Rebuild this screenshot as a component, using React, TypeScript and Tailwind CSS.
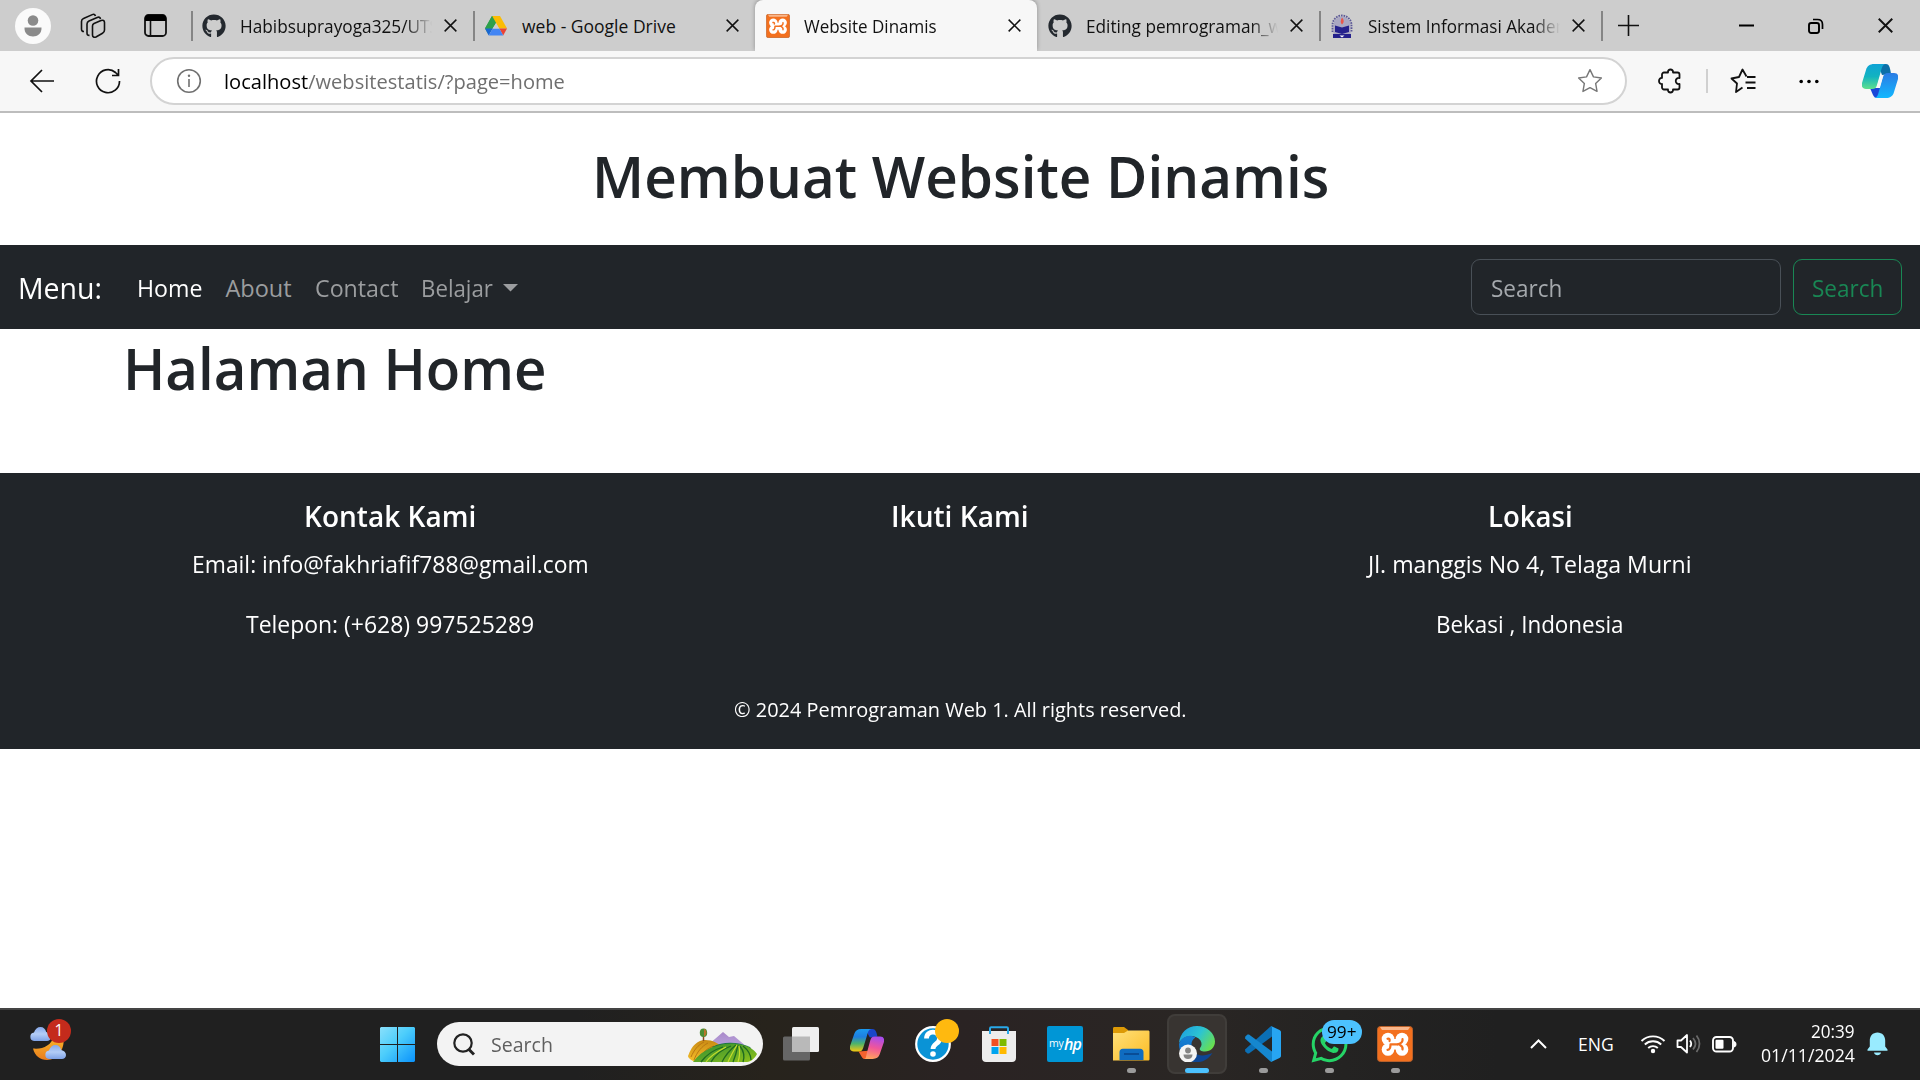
import { useLayoutEffect, useRef, useState, type ReactNode } from "react";
import { FaGithub, FaWhatsapp } from "react-icons/fa";

/** Single line of text that is condensed or widened to fill exactly `w` pixels. */
function Fit({ w, className = "", children }: { w: number; className?: string; children: ReactNode }) {
  const ref = useRef<HTMLSpanElement>(null);
  const [scale, setScale] = useState(1);
  useLayoutEffect(() => {
    if (ref.current && ref.current.offsetWidth) setScale(w / ref.current.offsetWidth);
  }, [w]);
  return (
    <span className={`block shrink-0 whitespace-nowrap ${className}`} style={{ width: w }}>
      <span ref={ref} className="inline-block origin-left" style={{ transform: `scaleX(${scale})` }}>
        {children}
      </span>
    </span>
  );
}

function Close({ s = 13, w = 1.6 }: { s?: number; w?: number }) {
  return (
    <svg width={s} height={s} viewBox="0 0 14 14" fill="none" stroke="#111" strokeWidth={w}>
      <path d="M.7.7 13.3 13.3M13.3.7.7 13.3" />
    </svg>
  );
}

function Drive() {
  return (
    <svg width="24" height="24" viewBox="0 0 24 24">
      <path d="M8 2h8L12 9z" fill="#188038" />
      <path d="M8 2 1 14.5 4.5 20.5 12 9z" fill="#34a853" />
      <path d="M8 2h8l7 12.500H15z" fill="#fbbc04" />
      <path d="M8 2 12 9 8.700 14.500H1z" fill="#2da04b" />
      <path d="M1 14.500H8.700L4.700 21.500z" fill="#1967d2" />
      <path d="M15.300 14.500H23L19.200 21.500z" fill="#ea4335" />
      <path d="M8.700 14.500H15.300L19.200 21.500H4.800z" fill="#4285f4" />
      <path d="M12 9 15.200 14.500H8.700z" fill="#cdcdcd" />
    </svg>
  );
}

function Xampp({ s }: { s: number }) {
  return (
    <svg width={s} height={s} viewBox="0 0 36 36">
      <rect x=".5" y=".5" width="35" height="35" rx="3" fill="#f3701e" stroke="#b9602a" />
      <path d="M3 1h30l-2 3H5z" fill="#f9b78c" />
      <g fill="#fff">
        <circle cx="11" cy="13" r="6.300" />
        <circle cx="25" cy="13" r="6.300" />
        <circle cx="11" cy="23.500" r="6.300" />
        <circle cx="25" cy="23.500" r="6.300" />
        <path d="M8 13h20l-1.500 5.200 1.500 5.300H8l1.500-5.300z" />
      </g>
      <g fill="none" stroke="#f3701e" strokeWidth="2.200" strokeLinecap="round" strokeLinejoin="round">
        <path d="M10.500 12.800c2-.6 2.500 1 2 2.200M10.500 23.800c2.500.3 3-3 3-5.500h7.500" />
        <path d="M21 18.300c3-.8 5-2.500 4.500-5.300M23 19c2 1 3 2.500 2.500 4.500" />
      </g>
    </svg>
  );
}

function Crest() {
  return (
    <svg width="24" height="26" viewBox="0 0 24 26">
      <path d="M3.500 23V12a8.500 8.500 0 0 1 17 0v11z" fill="#aaa8c2" />
      <path d="M2.500 19v-7a9.500 9.500 0 0 1 19 0v7" fill="none" stroke="#5a5796" strokeWidth="1.800" strokeDasharray="1.600 1" />
      <path d="M5 12.500l7 2 7-2v6.500l-7 2-7-2z" fill="#25218c" />
      <path d="M3 21h18v4H3z" fill="#25218c" />
      <path d="M12 4.500c2.500 3 2 5 0 7-2-2-1.500-4 0-7z" fill="#e8574b" />
      <path d="M9.500 22.500h5l-2.500 2z" fill="#fff" />
    </svg>
  );
}

function Tab({ icon, title, w, active, bar }: { icon: ReactNode; title: string; w: number; active?: boolean; bar?: boolean }) {
  return (
    <div
      className={`flex h-[51px] w-[282px] shrink-0 items-center ${
        active ? "rounded-t-lg bg-[#f7f7f7] shadow-[0_-1px_4px_rgba(0,0,0,0.3)]" : ""
      }`}
    >
      <span className={`h-[30px] w-[2px] ${bar ? "bg-[#858585]" : ""}`} />
      <span className="ml-[9px] flex w-6 justify-center">{icon}</span>
      <span
        className={`ml-[14px] w-[192px] overflow-hidden ${
          w > 190 ? "[mask-image:linear-gradient(to_right,#000_165px,transparent_192px)]" : ""
        }`}
      >
        <Fit w={w} className="text-[17.5px] leading-6">
          {title}
        </Fit>
      </span>
      <span className="ml-3">
        <Close />
      </span>
    </div>
  );
}

function TabStrip() {
  return (
    <div className="flex h-[51px] items-center bg-[#cdcdcd] text-[#111]">
      <div className="flex w-[191px] shrink-0 items-center">
        <span className="ml-[15px] flex h-9 w-9 items-center justify-center rounded-full bg-[#fafafa]">
          <svg width="18" height="22" viewBox="0 0 18 22" fill="#8a8a8a">
            <circle cx="9" cy="5.500" r="5.300" />
            <path d="M.5 12.500h17c.4 6-4 9-8.500 9s-8.900-3-8.500-9z" />
          </svg>
        </span>
        <svg className="ml-[29px]" width="26" height="26" viewBox="0 0 26 26" fill="none" stroke="#111" strokeWidth="1.600">
          <path d="M14 10.500 21 7.500c2-.8 3.500 0 3.500 2v7.500c0 1.500-.5 2.500-2 3.300L16 24c-2 .8-3.500 0-3.500-2v-9c0-1.200.4-2 1.500-2.500z" />
          <path d="M20.500 6c-.4-1.800-1.700-2.300-3.300-1.600L9 8c-1.400.6-2 1.500-2 3v9c0 1.600.7 2.500 2.500 2.400" />
          <path d="M15.500 3c-.5-1.700-1.700-2.100-3.200-1.400L3.500 5.500c-1.500.6-2 1.500-2 3V16c0 1.600.7 2.600 2.500 2.500" />
        </svg>
        <svg className="ml-[38px]" width="23" height="23" viewBox="0 0 23 23">
          <rect x="1" y="1" width="21" height="21" rx="3.500" fill="none" stroke="#111" strokeWidth="1.800" />
          <path d="M1 7V4a3 3 0 0 1 3-3h15a3 3 0 0 1 3 3v3z" fill="#000" />
          <path d="M6.500 7v15" stroke="#111" strokeWidth="1.600" />
        </svg>
      </div>
      <Tab bar icon={<FaGithub size={24} color="#24292f" />} title="Habibsuprayoga325/UTS" w={199} />
      <Tab bar icon={<Drive />} title="web - Google Drive" w={154} />
      <Tab active icon={<Xampp s={24} />} title="Website Dinamis" w={133} />
      <Tab icon={<FaGithub size={24} color="#24292f" />} title="Editing pemrograman_w" w={196} />
      <Tab bar icon={<Crest />} title="Sistem Informasi Akadem" w={203} />
      <span className="h-[30px] w-[2px] bg-[#858585]" />
      <svg className="ml-[15px]" width="21" height="21" viewBox="0 0 21 21" stroke="#111" strokeWidth="1.600">
        <path d="M10.500 0v21M0 10.500h21" />
      </svg>
      <div className="flex grow items-center justify-end gap-[54px] pr-[27px]">
        <svg width="15" height="3" viewBox="0 0 15 3">
          <rect width="15" height="2" y=".5" fill="#000" />
        </svg>
        <svg width="16" height="16" viewBox="0 0 16 16" fill="none" stroke="#000" strokeWidth="1.900">
          <rect x="1" y="5" width="10" height="10" rx="2.200" />
          <path d="M5 1.500h4.500c3 0 5 2 5 5V11" strokeWidth="1.700" />
        </svg>
        <Close s={15} w={1.8} />
      </div>
    </div>
  );
}

const STAR = "M12 1.500l3.200 6.700 7.300 1-5.300 5.100 1.300 7.300L12 18.100l-6.500 3.500 1.300-7.300L1.500 9.200l7.300-1z";

function Toolbar() {
  return (
    <div className="relative flex h-[62px] items-center border-b-2 border-[#bdbdbd] bg-[#f7f7f7]">
      <svg className="ml-[29px] shrink-0" width="26" height="24" viewBox="0 0 26 24" fill="none" stroke="#111" strokeWidth="1.700">
        <path d="M25 12H2M13 1 2 12l11 11" />
      </svg>
      <svg className="ml-[40px] shrink-0" width="26" height="26" viewBox="0 0 26 26" fill="none" stroke="#111" strokeWidth="1.700">
        <path d="M24.500 13A11.500 11.500 0 1 1 20.500 4.500L23 7M23.500 1v6.500H17" />
      </svg>
      <div className="ml-[29px] flex h-12 w-[1477px] shrink-0 items-center rounded-full border-2 border-[#d3d3d3] bg-white">
        <svg className="ml-[24px]" width="26" height="26" viewBox="0 0 26 26" fill="none" stroke="#707070" strokeWidth="1.600">
          <circle cx="13" cy="13" r="11.300" />
          <path d="M13 11v8" />
          <circle cx="13" cy="7.800" r="1.200" fill="#707070" stroke="none" />
        </svg>
        <Fit w={341} className="ml-[22px] text-[20.5px] leading-7 text-[#6f6f6f]">
          <span className="text-black">localhost</span>/websitestatis/?page=home
        </Fit>
        <svg className="mr-[22px] ml-auto" width="26" height="26" viewBox="0 0 24 24" fill="none" stroke="#777" strokeWidth="1.300" strokeLinejoin="round">
          <path d={STAR} />
        </svg>
      </div>
      <svg className="ml-[31px] shrink-0" width="24" height="26" viewBox="0 0 24 26" fill="none" stroke="#111" strokeWidth="1.800" strokeLinejoin="round">
        <path d="M6 4.500h4c-.6-4 5.600-4 5 0h4.500c1 0 2 1 2 2V10c-5-.6-5 6.600 0 6v3.500c0 1-1 2-2 2H15c.6 4-5.600 4-5 0H6c-1 0-2-1-2-2V16c-4 .5-4-6.500 0-6V6.500c0-1 1-2 2-2z" />
      </svg>
      <span className="ml-[24px] h-6 w-[2px] shrink-0 bg-[#d0d0d0]" />
      <svg className="ml-[22px] shrink-0" width="26" height="26" viewBox="0 0 26 26" fill="none" stroke="#111" strokeWidth="1.800" strokeLinejoin="round">
        <path d="M16.500 8.500 12.500 1.500 9 9 1.500 10.500 7 15.500 6 24l6.500-4.500M17 9h8.500M15.500 14.500h10M17 20h8.500" />
      </svg>
      <svg className="ml-[43px] shrink-0" width="20" height="5" viewBox="0 0 20 5">
        <circle cx="2.200" cy="2.500" r="1.800" />
        <circle cx="10" cy="2.500" r="1.800" />
        <circle cx="17.800" cy="2.500" r="1.800" />
      </svg>
      <svg className="ml-[43px] shrink-0" width="36" height="34" viewBox="0 0 36 34">
        <defs>
          <linearGradient id="tc1" x1="0" y1="0" x2="0" y2="1">
            <stop offset="0" stopColor="#0fa3d6" />
            <stop offset=".5" stopColor="#12b3c0" />
            <stop offset="1" stopColor="#5fe08c" />
          </linearGradient>
          <linearGradient id="tc2" x1="0" y1="0" x2="0" y2="1">
            <stop offset="0" stopColor="#2a7be4" />
            <stop offset="1" stopColor="#12b8ff" />
          </linearGradient>
        </defs>
        <path d="M16 0h8c3 0 4 3 5 10l-9 1z" fill="#0c6fa8" />
        <path d="M8 24l3 7c1 2 2 3 4 3h4l4-10z" fill="#1a47d8" />
        <path d="M12 0h12c-3 0-4 3-5 7l-4 14c-1 3-2 4-5 4H4c-3 0-5-2-4-6L4 6C5 2 8 0 12 0z" fill="url(#tc1)" />
        <path d="M24 34H12c3 0 4-3 5-7l4-14c1-3 2-4 5-4h6c3 0 5 2 4 6l-4 13c-1 4-4 6-8 6z" fill="url(#tc2)" />
        <path d="M18.500 11h2.800L17.500 24h-3z" fill="#f7f7f7" />
      </svg>
    </div>
  );
}

function NavBar() {
  return (
    <nav className="flex h-[84px] items-center bg-[#212529] px-[18px] pt-px">
      <Fit w={84} className="text-[29.5px] leading-10 text-white">Menu:</Fit>
      <Fit w={65} className="ml-[34.5px] text-[23.5px] leading-9 text-white">Home</Fit>
      <Fit w={66} className="ml-[24px] text-[23.5px] leading-9 text-[#9b9d9f]">About</Fit>
      <Fit w={83} className="ml-[23px] text-[23.5px] leading-9 text-[#9b9d9f]">Contact</Fit>
      <Fit w={72} className="ml-[23px] text-[23.5px] leading-9 text-[#9b9d9f]">Belajar</Fit>
      <svg className="ml-[10.5px]" width="15" height="8" viewBox="0 0 15 8">
        <path d="M0 0h15L7.500 7.500z" fill="#9b9d9f" />
      </svg>
      <div className="mb-px ml-auto flex h-14 w-[310px] items-center rounded-[9px] border border-[#495057] pt-px pl-[19px]">
        <Fit w={71} className="text-[23.5px] leading-9 text-[#a5a9ad]">Search</Fit>
      </div>
      <div className="mb-px ml-3 flex h-14 w-[109px] items-center justify-center rounded-[9px] border border-[#198754] pt-px">
        <Fit w={71} className="text-[23.5px] leading-9 text-[#198754]">Search</Fit>
      </div>
    </nav>
  );
}

function FooterColumn({ title, w, lines }: { title: string; w: number; lines: [string, number][] }) {
  return (
    <div className="flex w-[570px] flex-col items-center">
      <Fit w={w} className="mb-3 text-[29.5px] leading-9 font-semibold">{title}</Fit>
      {lines.map(([text, width]) => (
        <Fit key={text} w={width} className="mb-6 text-[23.5px] leading-9">{text}</Fit>
      ))}
    </div>
  );
}

function Page() {
  return (
    <div className="h-[895px] bg-white text-[#212529]">
      <header className="flex h-[132px] justify-center pt-[26px]">
        <Fit w={737} className="text-[58.5px] leading-[72px] font-semibold">Membuat Website Dinamis</Fit>
      </header>
      <NavBar />
      <main className="h-[144px] px-[123px] pt-[2px]">
        <Fit w={423} className="text-[58.5px] leading-[72px] font-semibold">Halaman Home</Fit>
      </main>
      <footer className="flex h-[276px] flex-col items-center bg-[#212529] pt-[25px] text-white">
        <div className="flex h-[195px]">
          <FooterColumn title="Kontak Kami" w={172} lines={[["Email: info@fakhriafif788@gmail.com", 397], ["Telepon: (+628) 997525289", 288]]} />
          <FooterColumn title="Ikuti Kami" w={138} lines={[]} />
          <FooterColumn title="Lokasi" w={85} lines={[["Jl. manggis No 4, Telaga Murni", 324], ["Bekasi , Indonesia", 188]]} />
        </div>
        <Fit w={453} className="ml-px text-[20.5px] leading-8">© 2024 Pemrograman Web 1. All rights reserved.</Fit>
      </footer>
    </div>
  );
}

function Cell({ children, mark }: { children: ReactNode; mark?: "idle" | "active" }) {
  return (
    <div className="relative flex h-[70px] w-[66px] shrink-0 items-center justify-center">
      {mark === "active" && <span className="absolute top-[4px] left-[3px] h-[60px] w-[60px] rounded-lg border-2 border-[#403d3a] bg-[#383431]" />}
      <span className="relative mb-[2px] flex">{children}</span>
      {mark === "idle" && <span className="absolute top-[58px] left-[28.5px] h-[5px] w-[9px] rounded-full bg-[#9b9b9b]" />}
      {mark === "active" && <span className="absolute top-[58px] left-[21px] h-[5px] w-6 rounded-full bg-[#4cc2ff]" />}
    </div>
  );
}

function Cloud({ x, y, s }: { x: number; y: number; s: number }) {
  return (
    <g transform={`translate(${x} ${y}) scale(${s})`}>
      <path d="M4 14a4.300 4.300 0 0 1 0-8.500C5 2 7.500 0 10.500 0s5 2 5.700 5C19 5.500 21 7.500 21 10s-2 4-4 4z" fill="url(#cl)" />
    </g>
  );
}

function Weather() {
  return (
    <div className="relative mb-[6px] ml-[28px] h-[46px] w-[46px] shrink-0">
      <svg width="46" height="46" viewBox="0 0 46 46">
        <defs>
          <linearGradient id="cl" x1="0" y1="0" x2="0" y2="1">
            <stop offset="0" stopColor="#86a8ea" />
            <stop offset=".5" stopColor="#b3cdf6" />
            <stop offset="1" stopColor="#7fa2e6" />
          </linearGradient>
          <linearGradient id="mn" x1="0" y1="0" x2="0" y2="1">
            <stop offset="0" stopColor="#fbb829" />
            <stop offset="1" stopColor="#e97c1c" />
          </linearGradient>
        </defs>
        <path d="M5 29.500c10 1 18-3 21-12h9c3 11-5 23.500-16 23.500C12 41 7 37 5 29.500z" fill="url(#mn)" />
        <Cloud x={2} y={8} s={1} />
        <Cloud x={17} y={26} s={1} />
      </svg>
      <span className="absolute top-0 left-[19px] flex h-6 w-6 items-center justify-center rounded-full bg-[#c42b1c] text-[15.5px] text-white">1</span>
    </div>
  );
}

function Landscape() {
  return (
    <svg width="70" height="36" viewBox="0 0 70 36">
      <defs>
        <linearGradient id="mt" x1="0" y1="0" x2="0" y2="1">
          <stop offset="0" stopColor="#a988c9" />
          <stop offset="1" stopColor="#c2b4e8" />
        </linearGradient>
        <linearGradient id="gr" x1="0" y1="0" x2="1" y2="1">
          <stop offset="0" stopColor="#2c8a35" />
          <stop offset="1" stopColor="#8fc31a" />
        </linearGradient>
        <linearGradient id="fl" x1="0" y1="0" x2="0" y2="1">
          <stop offset="0" stopColor="#c98a14" />
          <stop offset="1" stopColor="#f5c02a" />
        </linearGradient>
      </defs>
      <path d="M20 17 35 4l6 5 5-1 13 11-20 8z" fill="url(#mt)" />
      <path d="M0 28C4 17 10 12 17 12c8 0 13 3 19 9L8 34c-4-1-8-4-8-6z" fill="url(#fl)" />
      <path d="M3 29c3-7 7-12 13-15M6 32c3-8 8-14 14-17M12 30c2-5 7-10 14-12" fill="none" stroke="#b97712" />
      <path d="M24 19c12-6 26-5 38 0l4 6-30 2z" fill="#17704a" />
      <path d="M5 34C16 19 36 14 49 16c10 1 17 5 20 10-2 4-6 8-10 8z" fill="url(#gr)" />
      <path d="M13 34c5-7 12-12 22-15M23 34c4-7 12-13 20-16M34 34c4-8 9-13 14-17M45 34c3-7 4-12 5-17M55 34c2-6 0-12-3-16M63 32c0-6-3-10-8-14" fill="none" stroke="#1f6a20" strokeWidth="1.300" />
      <path d="M18 34c5-7 12-11 20-15M40 34c3-7 6-12 9-17M50 34c2-6 2-11 1-16" fill="none" stroke="#c6dc2c" strokeWidth="1.200" />
      <path d="M15.500 5v8" stroke="#8a4a1c" strokeWidth="1.500" />
      <ellipse cx="15.500" cy="4.800" rx="3.700" ry="4.300" fill="#4b8d34" />
      <path d="M16 .8c3 1 3.500 6 0 8z" fill="#b8742a" />
    </svg>
  );
}

function Copilot() {
  return (
    <svg width="34" height="32" viewBox="0 0 36 34">
      <defs>
        <linearGradient id="cp1" x1="0" y1="0" x2="0" y2="1">
          <stop offset="0" stopColor="#1b9af0" />
          <stop offset=".35" stopColor="#1e7ee0" />
          <stop offset=".65" stopColor="#4db36b" />
          <stop offset="1" stopColor="#f6c80e" />
        </linearGradient>
        <linearGradient id="cp2" x1=".6" y1="0" x2=".4" y2="1">
          <stop offset="0" stopColor="#a64cf0" />
          <stop offset=".5" stopColor="#f0569a" />
          <stop offset="1" stopColor="#ffa25c" />
        </linearGradient>
      </defs>
      <path d="M16 1h8c3 0 4 3 5 8l-8 1z" fill="#1b46c9" />
      <path d="M9 25l3 5c1 2 2 3 4 3h4l3-9z" fill="#f4622e" />
      <path d="M12 1h11c-3 0-4 3-5 7l-4 13c-1 3-2 4-5 4H4c-3 0-5-2-4-6L4.500 6C5.500 3 8 1 12 1z" fill="url(#cp1)" />
      <path d="M24 33H15c2 0 2-3 3-7l3.500-13c1-3 2-4 5-4H32c3 0 5 2 4 6l-4.500 13c-1 3-3.500 5-7.500 5z" fill="url(#cp2)" />
      <path d="M18.500 10h2.500l-3.800 14h-3z" fill="#27231f" />
    </svg>
  );
}

function Edge() {
  return (
    <svg width="36" height="36" viewBox="0 0 36 36">
      <defs>
        <linearGradient id="e1" x1="0" y1=".2" x2="1" y2=".7">
          <stop offset="0" stopColor="#1d9fe0" />
          <stop offset=".5" stopColor="#2cc4d2" />
          <stop offset="1" stopColor="#6be04a" />
        </linearGradient>
        <linearGradient id="e2" x1="0" y1="0" x2="0" y2="1">
          <stop offset="0" stopColor="#1582d4" />
          <stop offset="1" stopColor="#1164c4" />
        </linearGradient>
      </defs>
      <path d="M0 17C1 7 8 0 18 0s18 7.500 18 15.500c0 6-4.500 10-10 10-4 0-6-1.500-5-3.500 2-2 2-5 .5-7.500C17 8 5 8 0 17z" fill="url(#e1)" />
      <path d="M0 18C3 10 11 8 16.500 11.500 13 13 11.500 18 13 23c2 6 8 8 13 7.500-4 5-9 6-13 5C5 33 0 27 0 18z" fill="url(#e2)" />
      <path d="M14 19c-3 8 6 14 19.500 8C29 34 22 37.500 14.500 35.500 8 31 9 23 14 19z" fill="#0d4796" />
      <circle cx="9" cy="27.500" r="9" fill="#f5f5f5" />
      <circle cx="9" cy="24.500" r="2.900" fill="#858585" />
      <path d="M4.500 28.500h9c0 3-2 4.500-4.500 4.500s-4.500-1.500-4.500-4.500z" fill="#858585" />
    </svg>
  );
}

function Tray() {
  return (
    <div className="mb-[2px] ml-auto flex shrink-0 items-center text-white">
      <svg width="17" height="10" viewBox="0 0 17 10" fill="none" stroke="#fff" strokeWidth="2">
        <path d="M1 9l7.500-7.500L16 9" />
      </svg>
      <Fit w={36} className="ml-[31px] text-[17.5px] leading-6">ENG</Fit>
      <svg className="ml-[26px]" width="26" height="20" viewBox="0 0 26 20" fill="none" stroke="#fff" strokeWidth="1.900">
        <path d="M1.500 7a16.500 16.500 0 0 1 23 0M4.800 10.500a12 12 0 0 1 16.400 0M8.200 14a7 7 0 0 1 9.600 0" />
        <circle cx="13" cy="17" r="2.200" fill="#fff" stroke="none" />
      </svg>
      <svg className="ml-[10px]" width="26" height="22" viewBox="0 0 26 22" fill="none" stroke="#fff" strokeWidth="1.800" strokeLinejoin="round">
        <path d="M1.500 7.500H5L11 2v17.500l-6-5.500H1.500zM14 7.500c1.500 2 1.500 4.500 0 6.500" />
        <path d="M17 5c3 3.500 3 8 0 11.500M20.500 2.500c4 5 4 11.500 0 16.500" stroke="#6b6b6b" />
      </svg>
      <svg className="ml-[10px]" width="25" height="17" viewBox="0 0 25 17" fill="none">
        <rect x="1" y="1" width="20" height="14.500" rx="3.500" stroke="#fff" strokeWidth="1.900" />
        <rect x="3.500" y="3.700" width="8" height="9" rx="1" fill="#fff" />
        <path d="M22.500 5.500c2 .5 2 5 0 5.500z" fill="#fff" stroke="#fff" />
      </svg>
      <div className="mr-px mb-[2px] ml-[24px] flex flex-col items-end">
        <Fit w={44} className="text-[17.5px] leading-[24px]">20:39</Fit>
        <Fit w={94} className="text-[17.5px] leading-[24px]">01/11/2024</Fit>
      </div>
      <svg className="mr-[32px] ml-[11px]" width="21" height="24" viewBox="0 0 21 24" fill="#99ebff">
        <path d="M10.500.5c4.800 0 7.700 3.600 7.700 8v6l2.300 3v1.300H.5v-1.300l2.300-3v-6c0-4.400 2.900-8 7.700-8zM7 20.500h7c-.5 3.500-6.500 3.500-7 0z" />
      </svg>
    </div>
  );
}

function Taskbar() {
  return (
    <div className="flex h-[72px] items-center border-t-2 border-[#444] bg-[linear-gradient(to_right,#202020_0%,#202020_30%,#27231c_40%,#27231e_43%,#2a2323_50%,#2a2624_62%,#242322_70%,#202020_78%)]">
      <Weather />
      <div className="ml-[290px] flex items-center">
        <Cell>
          <svg width="35" height="35" viewBox="0 0 35 35">
            <defs>
              <linearGradient id="wn" x1="0" y1="0" x2="1" y2="1">
                <stop offset="0" stopColor="#8ae0fb" />
                <stop offset=".45" stopColor="#4ccdfb" />
                <stop offset="1" stopColor="#0a92fb" />
              </linearGradient>
            </defs>
            <path d="M1 0h16v17H0V1zM18 0h16l1 1v16H18zM0 18h17v17H1l-1-1zM18 18h17v16l-1 1H18z" fill="url(#wn)" />
          </svg>
        </Cell>
        <div className="mr-[5px] mb-[2px] ml-[7px] flex h-11 w-[326px] items-center rounded-full bg-[#f3f3f3]">
          <svg className="ml-[16px]" width="22" height="23" viewBox="0 0 22 23" fill="none" stroke="#222" strokeWidth="2.200">
            <circle cx="10" cy="10" r="8.700" />
            <path d="M15.500 16l5.500 5.500" strokeWidth="3" />
          </svg>
          <Fit w={62} className="ml-[16px] text-[20.5px] leading-7 text-[#5f5f5f]">Search</Fit>
          <span className="mt-1 mr-[5px] ml-auto">
            <Landscape />
          </span>
        </div>
        <Cell>
          <svg width="36" height="34" viewBox="0 0 36 34">
            <rect y="9.500" width="27" height="24" rx="1.500" fill="#666" />
            <rect x="9" y="0" width="27" height="25" rx="1.500" fill="#efefef" />
            <rect x="9" y="9.500" width="18" height="15.500" fill="#b9b9b9" />
          </svg>
        </Cell>
        <Cell>
          <Copilot />
        </Cell>
        <Cell>
          <svg width="36" height="36" viewBox="0 0 36 36">
            <circle cx="18" cy="18" r="16.800" fill="#0a93d6" stroke="#fff" strokeWidth="2.200" />
            <path d="M11.500 12.500c0-9 13.500-8 13 .5-.3 5-6.500 4.500-6.500 10" fill="none" stroke="#fff" strokeWidth="4.800" />
            <circle cx="18" cy="28" r="2.800" fill="#fff" />
          </svg>
          <span className="absolute -top-[7px] left-5 h-6 w-6 rounded-full bg-[#ffb90f]" />
        </Cell>
        <Cell>
          <svg width="36" height="36" viewBox="0 0 36 36">
            <path d="M9 8V2.500c0-.8.500-1.200 1.200-1.200h15.600c.7 0 1.200.4 1.200 1.200V8" fill="none" stroke="#28a8e8" strokeWidth="2" />
            <path d="M1 5h34v27c0 2.500-1.500 4-4 4H5c-2.500 0-4-1.500-4-4z" fill="#ededed" />
            <path d="M9 8V5M27 8V5" stroke="#28a8e8" strokeWidth="2" />
            <path d="M10.500 13h7v7h-7z" fill="#f25022" />
            <path d="M18.500 13h7v7h-7z" fill="#7fba00" />
            <path d="M10.500 21h7v7h-7z" fill="#00a4ef" />
            <path d="M18.500 21h7v7h-7z" fill="#ffb900" />
          </svg>
        </Cell>
        <Cell>
          <span className="flex h-9 w-9 items-center justify-center rounded-[2px] bg-[#0096d6] text-white">
            <span className="text-[10.5px]">my</span>
            <span className="text-[16px] leading-4 font-semibold tracking-tighter italic">hp</span>
          </span>
        </Cell>
        <Cell mark="idle">
          <svg width="37" height="34" viewBox="0 0 37 34">
            <defs>
              <linearGradient id="fd" x1="0" y1="0" x2="1" y2="1">
                <stop offset="0" stopColor="#ffe07a" />
                <stop offset="1" stopColor="#fbbc24" />
              </linearGradient>
            </defs>
            <path d="M0 1.500C0 .5.500 0 1.500 0H11l4 3v6H0z" fill="#dd9a06" />
            <path d="M0 6h11l4-2.500h20c1 0 1.500.5 1.500 1.500v27c0 1-.5 1.500-1.500 1.500H0z" fill="url(#fd)" />
            <path d="M6.500 33V25c0-2 1.200-3.300 3.300-3.300h17.400c2 0 3.300 1.300 3.300 3.300v8z" fill="#0f6cc0" />
            <path d="M11 27h15" stroke="#0a4a91" strokeWidth="1.800" />
          </svg>
        </Cell>
        <Cell mark="active">
          <Edge />
        </Cell>
        <Cell mark="idle">
          <svg width="36" height="36" viewBox="0 0 36 36">
            <path d="M0 23.500 25.500.5 27 0v10.500L4 27.500 2.500 27.500.3 25.500z" fill="#0b6fb5" />
            <path d="M0 12.500 25.500 35.500 27 36V25.500L4 8.500H2.500L.3 10.500z" fill="#1587cf" />
            <path d="M26 0 34.500 4c1 .5 1.500 1.300 1.500 2.300v23.400c0 1-.5 1.800-1.500 2.300L26 36c.7-.3 1-.8 1-2V2c0-1-.3-1.700-1-2z" fill="#27a5f2" />
          </svg>
        </Cell>
        <Cell mark="idle">
          <FaWhatsapp size={41} color="#25d366" className="-m-[2px]" />
          <span className="absolute -top-[6px] left-[11px] flex h-6 w-10 items-center justify-center rounded-full bg-[#4cc2ff] text-black">
            <Fit w={29} className="text-[16px] leading-6">99+</Fit>
          </span>
        </Cell>
        <Cell mark="idle">
          <Xampp s={36} />
        </Cell>
      </div>
      <Tray />
    </div>
  );
}

export default function App() {
  return (
    <div className="h-[1080px] w-[1920px] overflow-hidden bg-white font-['Open_Sans','Noto_Sans',sans-serif]">
      <TabStrip />
      <Toolbar />
      <Page />
      <Taskbar />
    </div>
  );
}
